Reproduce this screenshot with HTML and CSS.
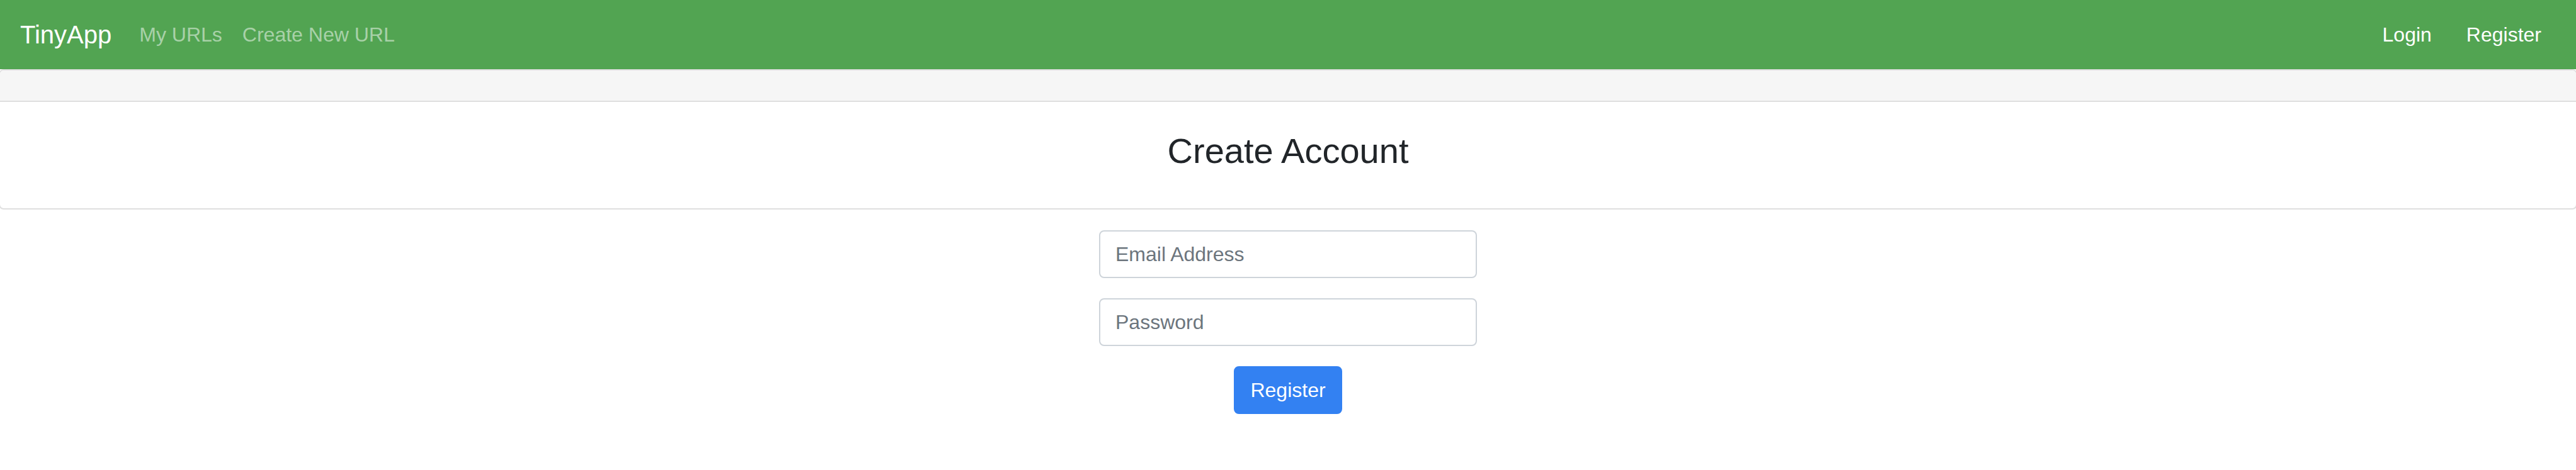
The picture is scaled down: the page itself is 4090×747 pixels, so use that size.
FILE: index.html
```html
<!DOCTYPE html>
<html lang="en">
<head>
<meta charset="utf-8">
<title>TinyApp - Register</title>
<link rel="stylesheet" href="styles.css">
</head>
<body>
<nav class="navbar">
  <a class="brand" href="#">TinyApp</a>
  <ul class="nav">
    <li><a class="nav-link" href="#">My URLs</a></li>
    <li><a class="nav-link" href="#">Create New URL</a></li>
  </ul>
  <ul class="nav nav-right">
    <li><a class="nav-link" href="#">Login</a></li>
    <li><a class="nav-link" href="#">Register</a></li>
  </ul>
</nav>
<main class="page">
  <div class="card">
    <div class="card-header"></div>
    <div class="card-body">
      <h3 class="title">Create Account</h3>
    </div>
  </div>
  <form class="form">
    <div class="form-group">
      <input class="form-control" type="email" name="email" placeholder="Email Address">
    </div>
    <div class="form-group">
      <input class="form-control" type="password" name="password" placeholder="Password">
    </div>
    <div class="actions">
      <button class="btn" type="submit">Register</button>
    </div>
  </form>
</main>
</body>
</html>
```
FILE: styles.css
```css
* {
  box-sizing: border-box;
}

body {
  margin: 0;
  font-family: "Liberation Sans", Arial, sans-serif;
  color: #212529;
  background: #fff;
}

.navbar {
  display: flex;
  align-items: center;
  height: 110px;
  padding: 0 39px 0 32px;
  background: #52a452;
}

.brand {
  font-size: 40px;
  line-height: 60px;
  color: #fff;
  text-decoration: none;
  margin-right: 28px;
}

.nav {
  display: flex;
  list-style: none;
  margin: 0;
  padding: 0;
}

.nav-right {
  margin-left: auto;
  gap: 23px;
}

.nav-link {
  display: block;
  padding: 0 16px;
  font-size: 32px;
  line-height: 48px;
  color: rgba(255, 255, 255, 0.5);
  text-decoration: none;
}

.nav-right .nav-link {
  color: #fff;
}

.page {
  overflow: hidden;
}

.card {
  margin: 0 -2px;
  border: 2px solid #dfdfdf;
  border-radius: 8px;
  background: #fff;
}

.card-header {
  height: 50px;
  background: #f6f6f6;
  border-bottom: 2px solid #dfdfdf;
  border-radius: 6px 6px 0 0;
}

.card-body {
  padding: 44px 40px 58px;
  text-align: center;
}

.title {
  margin: 0;
  font-size: 56px;
  line-height: 67px;
  font-weight: 400;
  color: #212529;
}

.form {
  width: 600px;
  margin: 33px auto 0;
}

.form-group {
  margin-bottom: 32px;
}

.form-control {
  display: block;
  width: 100%;
  height: 76px;
  padding: 12px 24px;
  font-family: inherit;
  font-size: 32px;
  color: #495057;
  background: #fff;
  border: 2px solid #ced4da;
  border-radius: 8px;
  outline: none;
}

.form-control::placeholder {
  color: #6c757d;
  opacity: 1;
}

.actions {
  text-align: center;
}

.btn {
  padding: 12px 24px;
  font-family: inherit;
  font-size: 32px;
  line-height: 48px;
  color: #fff;
  background: #3381f2;
  border: 2px solid #3381f2;
  border-radius: 8px;
  cursor: pointer;
}
```
